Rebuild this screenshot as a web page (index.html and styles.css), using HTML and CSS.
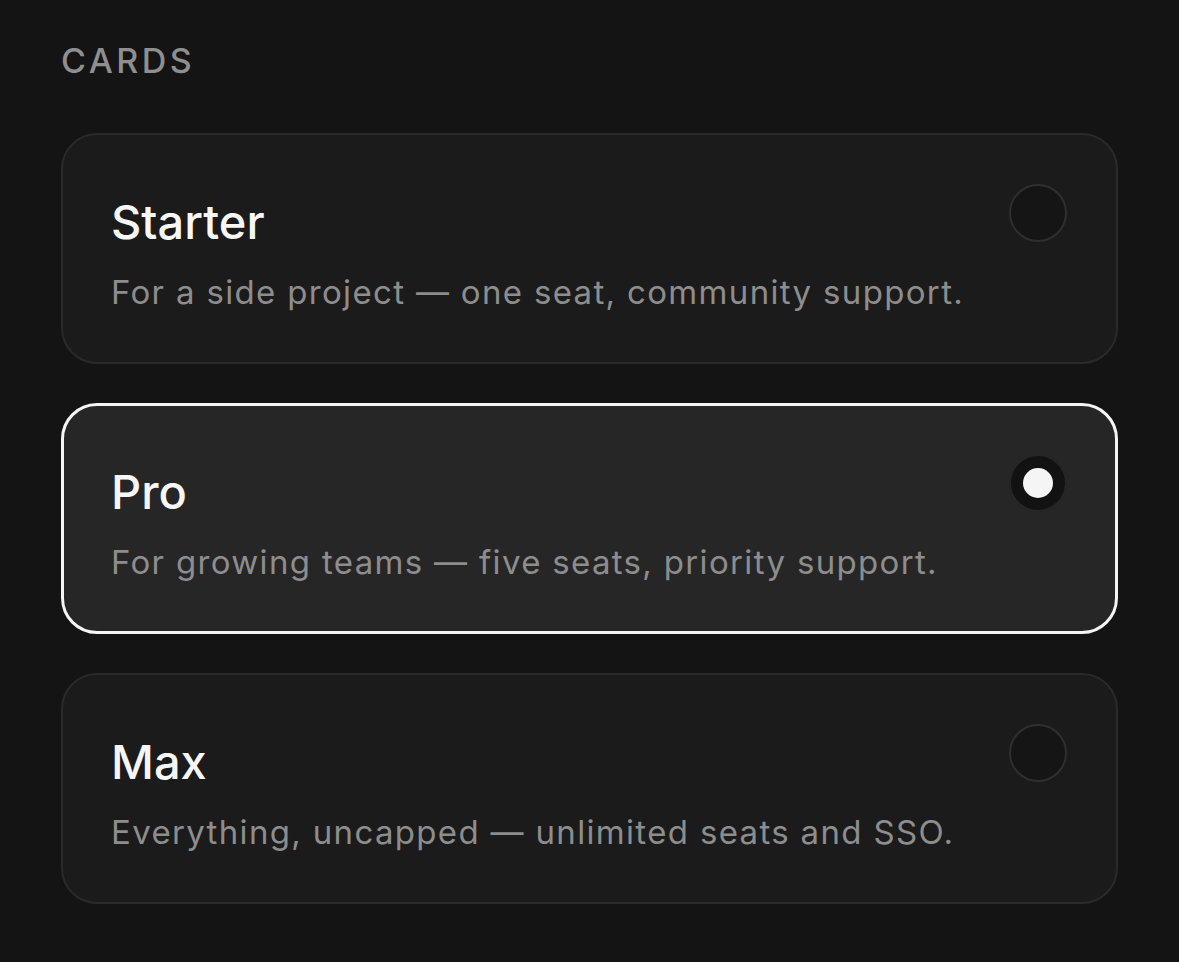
FILE: index.html
```html
<!DOCTYPE html>
<html lang="en">
<head>
<meta charset="utf-8">
<title>Cards</title>
<link rel="stylesheet" href="styles.css">
</head>
<body>
<main class="page">
  <h2 class="section-label">CARDS</h2>
  <div class="card-list" role="radiogroup">
    <div class="card" role="radio" aria-checked="false">
      <div class="card-text">
        <div class="card-title">Starter</div>
        <div class="card-desc">For a side project — one seat, community support.</div>
      </div>
      <span class="radio"></span>
    </div>
    <div class="card card--selected" role="radio" aria-checked="true">
      <div class="card-text">
        <div class="card-title">Pro</div>
        <div class="card-desc">For growing teams — five seats, priority support.</div>
      </div>
      <span class="radio radio--on"><span class="radio-dot"></span></span>
    </div>
    <div class="card" role="radio" aria-checked="false">
      <div class="card-text">
        <div class="card-title">Max</div>
        <div class="card-desc">Everything, uncapped — unlimited seats and SSO.</div>
      </div>
      <span class="radio"></span>
    </div>
  </div>
</main>
</body>
</html>
```

FILE: styles.css
```css
* { box-sizing: border-box; }

html, body {
  margin: 0;
  padding: 0;
  background: #141414;
}

body {
  font-family: Inter, "Noto Sans", "Liberation Sans", sans-serif;
  color: #f5f5f5;
}

.page {
  padding: 40px 61px 40px 61px;
}

.section-label {
  margin: 0 0 52px;
  font-size: 34px;
  line-height: 41px;
  font-weight: 500;
  letter-spacing: 3.5px;
  color: #8f8f8f;
}

.card-list {
  display: flex;
  flex-direction: column;
  gap: 39px;
}

.card {
  display: flex;
  align-items: flex-start;
  justify-content: space-between;
  background: #1b1b1b;
  border: 2px solid #2a2a2a;
  border-radius: 36px;
  padding: 49px 49px 47px 48px;
}

.card--selected {
  background: #262626;
  border: 3px solid #f5f5f5;
  padding: 48px 48px 46px 47px;
}

.card-text {
  padding-top: 9px;
  display: flex;
  flex-direction: column;
  gap: 18px;
}

.card-title {
  font-size: 47px;
  line-height: 58px;
  font-weight: 500;
  color: #f7f7f7;
}

.card-desc {
  font-size: 33px;
  line-height: 46px;
  font-weight: 400;
  letter-spacing: 1.33px;
  color: #8d8d8d;
}

.radio {
  flex: none;
  width: 58px;
  height: 58px;
  border-radius: 50%;
  background: #151515;
  border: 2px solid #2f2f2f;
  display: flex;
  align-items: center;
  justify-content: center;
}

.radio--on {
  background: #121212;
  border-color: #262626;
}

.radio-dot {
  width: 30px;
  height: 30px;
  border-radius: 50%;
  background: #f5f5f5;
}
```
